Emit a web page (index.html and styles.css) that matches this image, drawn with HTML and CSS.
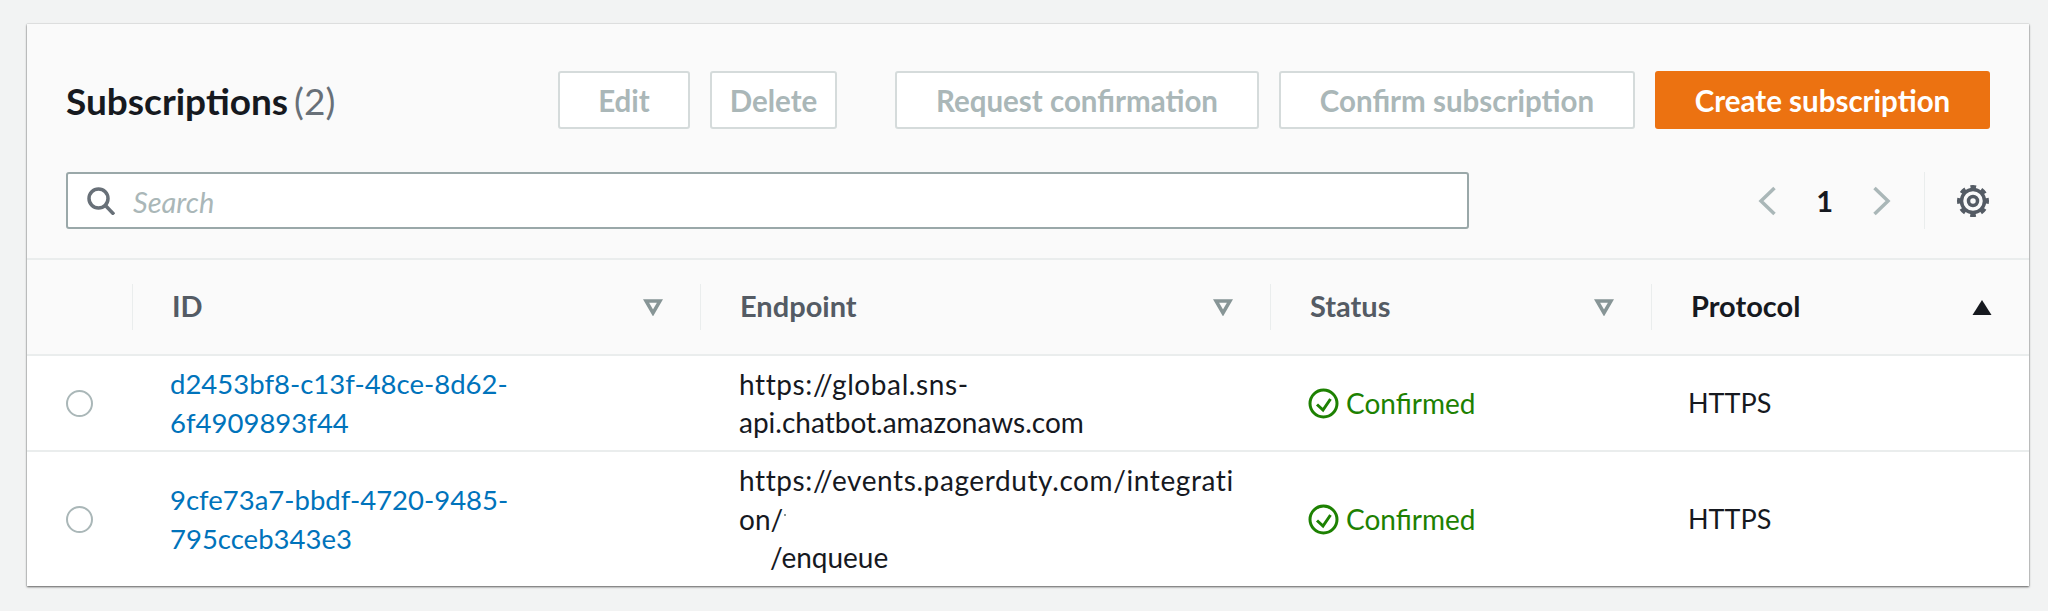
FILE: index.html
```html
<!DOCTYPE html>
<html lang="en">
<head>
    <meta charset="UTF-8">
    <title>Subscriptions</title>
    <link rel="stylesheet" href="styles.css">
</head>
<body>
    <div class="panel">
        <div class="panel-head">
            <div class="title-row">
                <h2>Subscriptions <span class="count">(2)</span></h2>
                <div class="actions">
                    <button class="btn btn-edit">Edit</button>
                    <button class="btn btn-delete">Delete</button>
                    <button class="btn btn-request">Request confirmation</button>
                    <button class="btn btn-confirm">Confirm subscription</button>
                    <button class="btn btn-primary">Create subscription</button>
                </div>
            </div>
            <div class="tools-row">
                <div class="search">
                    <svg class="search-icon" width="28" height="28" viewBox="0 0 28 28" fill="none" stroke="#687078" stroke-width="3.500"><circle cx="11.500" cy="11.500" r="9.500"/><path d="M18 18l9 9.500"/></svg>
                    <span class="placeholder">Search</span>
                </div>
                <div class="pager">
                    <svg width="20" height="30" viewBox="0 0 20 30" fill="none" stroke="#aab7b8" stroke-width="3.500"><path d="M17.500 2L4 15l13.500 13"/></svg>
                    <span class="page-num">1</span>
                    <svg width="20" height="30" viewBox="0 0 20 30" fill="none" stroke="#aab7b8" stroke-width="3.500"><path d="M2.500 2L16 15 2.500 28"/></svg>
                </div>
                <div class="settings">
                    <svg width="34" height="34" viewBox="0 0 34 34" fill="none" stroke="#545b64"><circle cx="17" cy="17" r="11.500" stroke-width="3.500"/><circle cx="17" cy="17" r="14" stroke-width="4" stroke-dasharray="5.500 5.500" transform="rotate(-12 17 17)"/><circle cx="17" cy="17" r="4.500" stroke-width="3.500"/></svg>
                </div>
            </div>
        </div>
        <table class="subs">
            <colgroup>
                <col class="col-select">
                <col class="col-id">
                <col class="col-endpoint">
                <col class="col-status">
                <col class="col-protocol">
            </colgroup>
            <thead>
                <tr>
                    <th></th>
                    <th><div class="th-inner"><span class="th-label">ID</span><svg class="sort" width="20" height="17" viewBox="0 0 20 17" fill="none" stroke="#879596" stroke-width="3.500"><path d="M3 2h14l-7 12z"/></svg></div></th>
                    <th><div class="th-inner"><span class="th-label">Endpoint</span><svg class="sort" width="20" height="17" viewBox="0 0 20 17" fill="none" stroke="#879596" stroke-width="3.500"><path d="M3 2h14l-7 12z"/></svg></div></th>
                    <th><div class="th-inner"><span class="th-label">Status</span><svg class="sort" width="20" height="17" viewBox="0 0 20 17" fill="none" stroke="#879596" stroke-width="3.500"><path d="M3 2h14l-7 12z"/></svg></div></th>
                    <th class="sorted"><div class="th-inner"><span class="th-label">Protocol</span><svg class="sort" width="20" height="17" viewBox="0 0 20 17"><path d="M10 1l9.500 15H.500z" fill="#16191f"/></svg></div></th>
                </tr>
            </thead>
            <tbody>
                <tr>
                    <td class="cell-radio"><span class="radio"></span></td>
                    <td><a href="#">d2453bf8-c13f-48ce-8d62-<br>6f4909893f44</a></td>
                    <td class="cell-endpoint"><span class="url-line">https://global.sns-</span><br>api.chatbot.amazonaws.com</td>
                    <td><span class="status"><svg width="31" height="31" viewBox="0 0 31 31" fill="none" stroke="#1d8102" stroke-width="3"><circle cx="15.500" cy="15.500" r="13.500"/><path d="M9 16.500l6 5.500 7.500-11"/></svg>Confirmed</span></td>
                    <td class="cell-protocol">HTTPS</td>
                </tr>
                <tr>
                    <td class="cell-radio"><span class="radio"></span></td>
                    <td><a href="#">9cfe73a7-bbdf-4720-9485-<br>795cceb343e3</a></td>
                    <td class="cell-endpoint"><span class="url-line">https://events.pagerduty.com/integrati</span><br>on/<span class="fleck"></span><br><span class="tail">/enqueue</span></td>
                    <td><span class="status"><svg width="31" height="31" viewBox="0 0 31 31" fill="none" stroke="#1d8102" stroke-width="3"><circle cx="15.500" cy="15.500" r="13.500"/><path d="M9 16.500l6 5.500 7.500-11"/></svg>Confirmed</span></td>
                    <td class="cell-protocol">HTTPS</td>
                </tr>
            </tbody>
        </table>
    </div>
</body>
</html>
```

FILE: styles.css
```css
body {
    margin: 0;
    padding: 24px 19px 25px 27px;
    background-color: #f2f3f3;
    font-family: Lato, "Noto Sans", Arial, sans-serif;
    color: #16191f;
}

.panel {
    background-color: #fff;
    box-shadow: 0 1px 2px rgba(0, 0, 0, 0.6), 0 0 1px rgba(0, 0, 0, 0.25);
}

.panel-head {
    background-color: #fafafa;
    border-bottom: 2px solid #eaeded;
    padding: 47px 39px 0;
    height: 236px;
    box-sizing: border-box;
}

.title-row {
    display: flex;
    justify-content: space-between;
    align-items: center;
    height: 58px;
}

h2 {
    margin: 0;
    font-size: 37px;
    font-weight: 700;
}

.count {
    margin-left: -3px;
    font-weight: 400;
    color: #687078;
}

.actions {
    display: flex;
    gap: 20px;
}

.btn {
    height: 58px;
    box-sizing: border-box;
    border: 2px solid #d5dbdb;
    border-radius: 3px;
    background-color: #fff;
    color: #aab7b8;
    font-family: inherit;
    font-size: 29.500px;
    font-weight: 700;
    padding: 0;
}

.btn-edit { width: 132px; }
.btn-delete { width: 127px; margin-right: 38px; }
.btn-request { width: 364px; }
.btn-confirm { width: 356px; }

.btn-primary {
    width: 335px;
    border: none;
    background-color: #ec7211;
    color: #fff;
}

.tools-row {
    display: flex;
    align-items: center;
    margin-top: 43px;
}

.search {
    display: flex;
    align-items: center;
    flex-shrink: 0;
    width: 1403px;
    height: 57px;
    box-sizing: border-box;
    border: 2px solid #9aa8a9;
    border-radius: 3px;
    background-color: #fff;
    padding-left: 19px;
}

.search-icon {
    margin-right: 18px;
}

.placeholder {
    margin-top: 2px;
    font-size: 29px;
    font-style: italic;
    color: #aab7b8;
}

.pager {
    display: flex;
    align-items: center;
    margin-left: auto;
    gap: 39px;
    padding-right: 32px;
}

.page-num {
    font-size: 29px;
    font-weight: 700;
}

.settings {
    display: flex;
    align-items: center;
    height: 57px;
    border-left: 1px solid #eaeded;
    padding-left: 31px;
}

.subs {
    width: 100%;
    table-layout: fixed;
    border-collapse: collapse;
}

.col-select { width: 105px; }
.col-id { width: 568px; }
.col-endpoint { width: 570px; }
.col-status { width: 381px; }

th {
    height: 94px;
    padding: 0;
    background-color: #fafafa;
    border-bottom: 2px solid #eaeded;
    text-align: left;
    font-size: 29px;
    font-weight: 700;
    color: #545b64;
}

th.sorted {
    color: #16191f;
}

.th-inner {
    display: flex;
    justify-content: space-between;
    align-items: center;
    height: 46px;
    border-left: 1px solid #eaeded;
    padding: 0 37px 0 39px;
}

.th-label {
    margin-bottom: 4px;
}

td {
    padding: 0 0 0 38px;
    font-size: 28px;
    line-height: 38.500px;
    vertical-align: middle;
}

tbody tr:first-child td {
    height: 94px;
    border-bottom: 2px solid #eaeded;
}

tbody tr:last-child td {
    height: 134px;
}

.cell-radio {
    padding-left: 39px;
}

.cell-endpoint {
    padding-left: 39px;
}

.cell-protocol {
    padding-left: 37px;
    font-size: 27px;
}

.url-line {
    letter-spacing: 0.6px;
}

.radio {
    display: block;
    width: 27px;
    height: 27px;
    box-sizing: border-box;
    border: 2px solid #aab7b8;
    border-radius: 50%;
    background-color: #fff;
}

a {
    color: #0073bb;
    font-size: 27.500px;
    text-decoration: none;
}

.status {
    display: flex;
    align-items: center;
    gap: 7px;
    color: #1d8102;
}

.fleck {
    display: inline-block;
    width: 2px;
    height: 2px;
    margin: 0 0 14px 1px;
    background-color: #879596;
}

.tail {
    padding-left: 31px;
}
```
